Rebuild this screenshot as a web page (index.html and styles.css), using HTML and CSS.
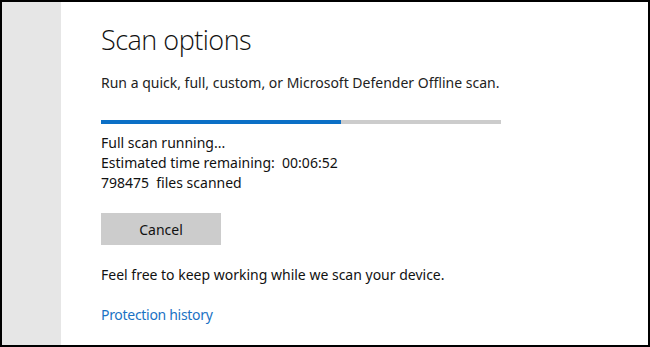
FILE: index.html
```html
<!DOCTYPE html>
<html lang="en">
<head>
  <meta charset="UTF-8">
  <meta name="viewport" content="width=device-width, initial-scale=1.0">
  <title>Scan options</title>
  <link rel="stylesheet" href="styles.css">
</head>
<body>
  <div class="window">
    <div class="sidebar"></div>
    <div class="content">
      <h1>Scan options</h1>
      <p class="subtitle">Run a quick, full, custom, or Microsoft Defender Offline scan.</p>

      <div class="progress">
        <div class="progress-fill" style="width: 60%"></div>
      </div>

      <div class="status">
        <div>Full scan running...</div>
        <div>Estimated time remaining:&nbsp; 00:06:52</div>
        <div>798475&nbsp; files scanned</div>
      </div>

      <button type="button" class="cancel-btn">Cancel</button>

      <p class="note">Feel free to keep working while we scan your device.</p>

      <a href="#" class="history-link">Protection history</a>
    </div>
  </div>
</body>
</html>
```

FILE: styles.css
```css
html, body {
  margin: 0;
  padding: 0;
}
body {
  font-family: "Noto Sans", "Open Sans", Arial, sans-serif;
  background-color: #fff;
  color: #000;
}
.window {
  box-sizing: border-box;
  width: 650px;
  height: 347px;
  border: 2px solid #000;
  display: flex;
  overflow: hidden;
}
.sidebar {
  width: 59px;
  background-color: #e6e6e6;
  flex-shrink: 0;
}
.content {
  flex: 1;
  padding: 18px 0 0 40px;
}
h1 {
  font-family: "Open Sans", sans-serif;
  font-weight: 300;
  font-size: 27px;
  letter-spacing: -0.5px;
  margin: 0;
  line-height: 40px;
  color: #111;
}
.subtitle {
  font-size: 14px;
  margin: 13px 0 0;
  line-height: 20px;
  color: #222;
}
.progress {
  width: 400px;
  height: 4px;
  background-color: #cccccc;
  margin-top: 27px;
}
.progress-fill {
  height: 100%;
  background-color: #0b6fc6;
}
.status {
  font-size: 14px;
  line-height: 20px;
  margin-top: 9px;
  color: #111;
}
.cancel-btn {
  display: block;
  width: 120px;
  height: 32px;
  margin-top: 20px;
  border: none;
  background-color: #cccccc;
  font-family: inherit;
  font-size: 14px;
  color: #111;
  padding: 0;
}
.note {
  font-size: 14px;
  line-height: 20px;
  margin: 20px 0 0;
  color: #111;
}
.history-link {
  display: inline-block;
  margin-top: 20px;
  font-size: 14px;
  letter-spacing: -0.3px;
  line-height: 20px;
  color: #1a72c4;
  text-decoration: none;
}
```
